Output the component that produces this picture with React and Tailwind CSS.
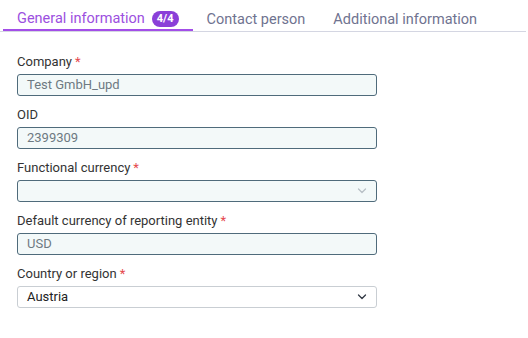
import React from 'react';

const Chevron = ({ className }) => (
    <svg width="10" height="6" viewBox="0 0 10 6" className={className} fill="none">
        <path d="M1.5 1l3.5 3.5 3.5-3.5" stroke="currentColor" strokeWidth="1.3" strokeLinecap="round" strokeLinejoin="round" />
    </svg>
);

const Label = ({ children, required }) => (
    <div className="text-[13px] leading-[16px] text-[#333333] mb-[4px]">
        {children}
        {required && <span className="text-[#e5484d] ml-[3px]">*</span>}
    </div>
);

const Field = ({ label, required, value, select, enabled }) => (
    <div className="mb-[11px]">
        <Label required={required}>{label}</Label>
        <div
            className={
                enabled
                    ? 'w-[360px] h-[22px] rounded-[3px] border border-[#c9ced3] bg-white flex items-center px-[9px] text-[13px] text-[#222222]'
                    : 'w-[360px] h-[22px] rounded-[3px] border border-[#4f6b7b] bg-[#f3f9f9] flex items-center px-[9px] text-[13px] text-[#6e7a82]'
            }
        >
            <span className="flex-1">{value}</span>
            {select && <Chevron className={enabled ? 'text-[#333a45]' : 'text-[#b8c0c6]'} />}
        </div>
    </div>
);

export default function App() {
    const tabs = [
        { name: 'General information', active: true, badge: '4/4' },
        { name: 'Contact person' },
        { name: 'Additional information' },
    ];

    return (
        <div className="w-[528px] h-[338px] bg-white" style={{ fontFamily: 'Roboto, "Liberation Sans", sans-serif' }}>
            <div className="flex pl-[3px] pt-[9px] mr-[2px] border-b border-[#d4d6e2]">
                {tabs.map((t) => (
                    <div
                        key={t.name}
                        className={
                            t.active
                                ? 'flex items-center gap-[7px] px-[14px] h-[22px] pb-[1px] border-b-2 border-[#a34ee8] -mb-px text-[14.5px] text-[#9c4fe0]'
                                : 'flex items-center px-[14px] h-[22px] pb-[1px] text-[14.5px] text-[#6f7390]'
                        }
                    >
                        {t.name}
                        {t.badge && (
                            <span className="bg-[#8a3fd8] text-white text-[11px] font-bold rounded-full px-[5px] h-[16px] leading-[16px]">
                                {t.badge}
                            </span>
                        )}
                    </div>
                ))}
            </div>

            <div className="pl-[17px] pt-[22px]">
                <Field label="Company" required value="Test GmbH_upd" />
                <Field label="OID" value="2399309" />
                <Field label="Functional currency" required value="" select />
                <Field label="Default currency of reporting entity" required value="USD" />
                <Field label="Country or region" required value="Austria" select enabled />
            </div>
        </div>
    );
}
